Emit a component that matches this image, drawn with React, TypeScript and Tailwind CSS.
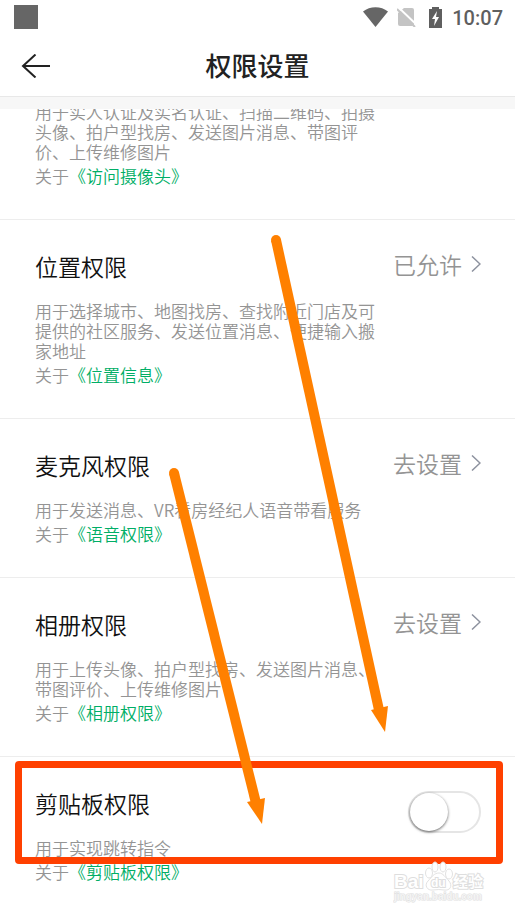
import type { ReactNode } from 'react'

type Permission = {
  title: string
  desc: string
  policy: string
  status: string
}

const permissions: Permission[] = [
  {
    title: '位置权限',
    desc: '用于选择城市、地图找房、查找附近门店及可提供的社区服务、发送位置消息、便捷输入搬家地址',
    policy: '位置信息',
    status: '已允许',
  },
  {
    title: '麦克风权限',
    desc: '用于发送消息、VR看房经纪人语音带看服务',
    policy: '语音权限',
    status: '去设置',
  },
  {
    title: '相册权限',
    desc: '用于上传头像、拍户型找房、发送图片消息、带图评价、上传维修图片',
    policy: '相册权限',
    status: '去设置',
  },
]

function StatusBar() {
  return (
    <div className="flex h-9 items-center justify-between pb-0.5 pl-[14px] pr-3">
      <div className="h-6 w-6 bg-[#666]" />
      <div className="flex items-center text-[#5f5f5f]">
        <svg className="mr-[9px] h-5 w-[25px]" viewBox="0 0 25 20" fill="#666" aria-hidden="true">
          <path d="M0 4.5C7-1.3 18-1.3 25 4.5L12.5 20Z" />
        </svg>
        <svg className="mr-[13px] h-5 w-[19px]" viewBox="0 0 19 20" aria-hidden="true">
          <path d="M7 1H15Q17 1 17 3V17Q17 19 15 19H3Q1 19 1 17V6Z" fill="#c4c4c4" />
          <path d="M1 0L20 18" stroke="#fff" strokeWidth="2" />
          <path d="M0 2L18 20" stroke="#c4c4c4" strokeWidth="2" />
        </svg>
        <svg className="mr-[10px] h-[21px] w-[13px]" viewBox="0 0 13 21" aria-hidden="true">
          <path d="M3 2V0H10V2H13V21H0V2Z" fill="#5f5f5f" />
          <path d="M8 4L3 12H6L5 19L10 10H7Z" fill="#fff" />
        </svg>
        <span className="pt-0.5 font-[Roboto] text-[20px] font-medium leading-6">10:07</span>
      </div>
    </div>
  )
}

function Details({ desc, policy }: { desc: string; policy: string }) {
  return (
    <div className="text-[17px] font-[350] text-[#949494]">
      <p className="max-w-[352px] leading-5">{desc}</p>
      <p className="leading-7">
        关于
        <a href="#policy" className="text-[#00ae66]">
          <span className="font-['Noto_Sans_CJK_JP',sans-serif]">《</span>
          {policy}
          <span className="font-['Noto_Sans_CJK_JP',sans-serif]">》</span>
        </a>
      </p>
    </div>
  )
}

function Row({ title, control, children }: { title: ReactNode; control: ReactNode; children: ReactNode }) {
  return (
    <section className="relative border-b border-[#ededed] pb-[29px] pl-[35px] pr-[34px] pt-[30px]">
      <div className="mb-[19px] flex h-8 items-center justify-between">
        <h2 className="text-[23px] font-[350] leading-8 text-[#111]">{title}</h2>
        {control}
      </div>
      {children}
    </section>
  )
}

function StatusButton({ status }: { status: string }) {
  return (
    <button type="button" className="mb-1 flex items-center gap-[9px] text-[23px] font-[350] leading-8 text-[#949494]">
      {status}
      <svg className="h-4 w-[10px]" viewBox="0 0 10 16" fill="none" stroke="#8d929f" strokeWidth="1.5" aria-hidden="true">
        <path d="M1 0.5L9 8L1 15.5" />
      </svg>
    </button>
  )
}

function Watermark() {
  return (
    <div className="pointer-events-none absolute right-[28px] top-[103px] w-[94px]">
      <svg className="w-full" viewBox="0 0 94 46" aria-hidden="true">
        <g fill="#fff" stroke="#e2e2e2" strokeWidth="1">
          <ellipse cx="36" cy="13" rx="3.5" ry="5" />
          <ellipse cx="42" cy="7" rx="3" ry="5" />
          <ellipse cx="50" cy="7" rx="3" ry="5" />
          <ellipse cx="56" cy="14" rx="3.5" ry="5" />
          <path d="M46 13C50 13 52 17 56 21C60 26 57 31 51 30Q46 29 40 30C34 31 31 25 35 21C39 17 41 13 46 13Z" />
        </g>
        <g
          fill="#fff"
          stroke="#dedede"
          strokeWidth="2"
          paintOrder="stroke"
          fontFamily="'Liberation Sans', 'Noto Sans CJK SC', sans-serif"
          fontWeight="bold"
        >
          <text x="1" y="28" fontSize="19">Bai</text>
          <text x="38" y="27" fontSize="12">du</text>
          <text x="60" y="27" fontSize="15">经验</text>
          <text x="1" y="40" fontSize="10" strokeWidth="1" fill="#f4f4f4">jingyan.baidu.com</text>
        </g>
      </svg>
    </div>
  )
}

function Arrows() {
  return (
    <svg className="pointer-events-none absolute left-0 top-0 h-[915px] w-[515px]" viewBox="0 0 515 915" aria-hidden="true">
      <g stroke="#ff8000" strokeWidth="10">
        <path d="M276 240L379 710" />
        <path d="M174 473L256 803" />
      </g>
      <g fill="#ff8000">
        <circle cx="276" cy="240" r="5" />
        <circle cx="174" cy="473" r="5" />
        <path d="M371 710L388 706L385 732Z" />
        <path d="M247 802L265 798L262 824Z" />
      </g>
    </svg>
  )
}

export default function App() {
  return (
    <div className="relative min-h-screen bg-white font-['Noto_Sans_CJK_SC',sans-serif]">
      <div className="relative z-10 bg-white">
        <StatusBar />
        <header className="grid h-[61px] grid-cols-[1fr_auto_1fr] items-center border-b border-[#e8e8e8] px-[21px]">
          <button type="button" aria-label="返回" className="w-fit">
            <svg className="h-6 w-[29px]" viewBox="0 0 29 24" fill="none" stroke="#222" strokeWidth="2" aria-hidden="true">
              <path d="M14.5 0.5L2 12L14.5 23.5M2 12H29" />
            </svg>
          </button>
          <h1 className="pb-0.5 text-[26px] font-medium leading-8 text-[#222]">权限设置</h1>
        </header>
        <div className="h-3 bg-[#f7f7f7]" />
      </div>

      <main>
        {/* camera row, scrolled under the header */}
        <section className="-mt-[7px] border-b border-[#ededed] pb-[29px] pl-[35px] pr-[34px]">
          <Details
            desc="用于实人认证及实名认证、扫描二维码、拍摄头像、拍户型找房、发送图片消息、带图评价、上传维修图片"
            policy="访问摄像头"
          />
        </section>

        {permissions.map((item) => (
          <Row key={item.title} title={item.title} control={<StatusButton status={item.status} />}>
            <Details desc={item.desc} policy={item.policy} />
          </Row>
        ))}

        <Row
          title={<label htmlFor="clipboard">剪贴板权限</label>}
          control={
            <input
              id="clipboard"
              type="checkbox"
              className="mt-[18px] h-[42px] w-[73px] shrink-0 appearance-none rounded-full border-2 border-[#e5e5e5] bg-white before:block before:size-[38px] before:rounded-full before:bg-white before:shadow-[0_1px_3px_rgba(0,0,0,0.6)] checked:bg-[#00ae66] checked:before:ml-[31px]"
            />
          }
        >
          <Details desc="用于实现跳转指令" policy="剪贴板权限" />
          <div className="pointer-events-none absolute left-[15px] right-3 top-1 h-[103px] rounded-[4px] border-[7px] border-[#ff4000]" />
          <Watermark />
        </Row>
      </main>
      <Arrows />
    </div>
  )
}
